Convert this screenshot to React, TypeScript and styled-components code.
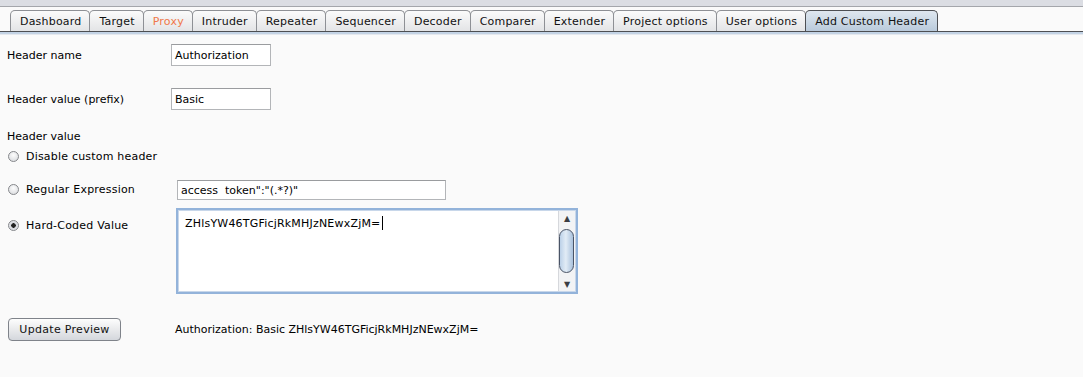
import styled, { createGlobalStyle } from "styled-components";

const GlobalStyle = createGlobalStyle`
  html, body {
    margin: 0;
    padding: 0;
    background: #fafafa;
  }
  body {
    font-family: "DejaVu Sans", "Liberation Sans", sans-serif;
    font-size: 11px;
    color: #000;
  }
`;

const tabs = [
  "Dashboard",
  "Target",
  "Proxy",
  "Intruder",
  "Repeater",
  "Sequencer",
  "Decoder",
  "Comparer",
  "Extender",
  "Project options",
  "User options",
  "Add Custom Header",
];

const HEADER_VALUE = "ZHlsYW46TGFicjRkMHJzNEwxZjM=";

const App: React.FC = () => {
  return (
    <Page>
      <GlobalStyle />
      <TopStrip />
      <TabBar>
        {tabs.map((t) => (
          <Tab
            key={t}
            $active={t === "Add Custom Header"}
            $highlight={t === "Proxy"}
          >
            {t}
          </Tab>
        ))}
      </TabBar>
      <TabUnderline />

      <Content>
        <FieldRow $top={9}>
          <Label>Header name</Label>
          <TextField $width={100} $offset={0}>
            Authorization
          </TextField>
        </FieldRow>
        <FieldRow $top={22}>
          <Label>Header value (prefix)</Label>
          <TextField $width={100} $offset={0}>
            Basic
          </TextField>
        </FieldRow>

        <SectionLabel>Header value</SectionLabel>

        <RadioRow $top={6}>
          <Radio />
          <RadioLabel>Disable custom header</RadioLabel>
        </RadioRow>

        <FieldRow $top={17}>
          <RadioLine>
            <Radio />
            <RadioLabel>Regular Expression</RadioLabel>
          </RadioLine>
          <TextField $width={269} $offset={0} $height={20}>
            access  token":"(.*?)"
          </TextField>
        </FieldRow>

        <AreaRow>
          <RadioLine $pad={11}>
            <Radio $checked />
            <RadioLabel>Hard-Coded Value</RadioLabel>
          </RadioLine>
          <AreaBox>
            <AreaText>
              {HEADER_VALUE}
              <Caret />
            </AreaText>
            <Scrollbar>
              <Arrow>▲</Arrow>
              <Track>
                <Thumb />
              </Track>
              <Arrow>▼</Arrow>
            </Scrollbar>
          </AreaBox>
        </AreaRow>

        <FooterRow>
          <Button>Update Preview</Button>
          <Preview>Authorization: Basic {HEADER_VALUE}</Preview>
        </FooterRow>
      </Content>
    </Page>
  );
};

export default App;

const Page = styled.div`
  width: 1083px;
  height: 377px;
  overflow: hidden;
  background: #fafafa;
`;

const TopStrip = styled.div`
  height: 6px;
  background: #dbdde3;
  border-bottom: 1px solid #a4a6ab;
`;

const TabBar = styled.div`
  display: flex;
  align-items: flex-end;
  padding: 3px 0 0 10px;
  height: 21px;
  border-bottom: 1px solid #4d4f53;
  background: #fafafa;
`;

const Tab = styled.div<{ $active?: boolean; $highlight?: boolean }>`
  box-sizing: border-box;
  height: 21px;
  padding: 0 8px 0 9px;
  margin-right: -1px;
  display: flex;
  align-items: center;
  font-size: 11px;
  letter-spacing: 0.2px;
  color: ${(p) => (p.$highlight ? "#f0784a" : "#111")};
  border: 1px solid ${(p) => (p.$active ? "#4d4f53" : "#8e9095")};
  border-bottom: none;
  border-radius: 5px 5px 0 0;
  background: ${(p) =>
    p.$active
      ? "linear-gradient(#dfe7ef, #b9cadb)"
      : "linear-gradient(#fbfbfb, #e3e4e6)"};
  position: relative;
  z-index: ${(p) => (p.$active ? 1 : 0)};
`;

const TabUnderline = styled.div`
  height: 2px;
  background: #c3d3e5;
  border-bottom: 1px solid #e4e8ee;
`;

const Content = styled.div`
  display: flex;
  flex-direction: column;
  padding-left: 7px;
`;

const FieldRow = styled.div<{ $top: number }>`
  display: flex;
  align-items: center;
  margin-top: ${(p) => p.$top}px;
`;

const Label = styled.div`
  width: 164px;
`;

const TextField = styled.div<{ $width: number; $offset: number; $height?: number }>`
  box-sizing: border-box;
  width: ${(p) => p.$width}px;
  height: ${(p) => p.$height ?? 22}px;
  margin-left: ${(p) => p.$offset}px;
  padding: 0 3px;
  display: flex;
  align-items: center;
  background: #fff;
  border: 1px solid #b3b5b8;
  border-top-color: #9a9c9f;
  white-space: pre;
`;

const SectionLabel = styled.div`
  margin-top: 19px;
  line-height: 15px;
`;

const RadioRow = styled.div<{ $top: number }>`
  display: flex;
  align-items: center;
  margin-top: ${(p) => p.$top}px;
`;

const RadioLine = styled.div<{ $pad?: number }>`
  width: 170px;
  display: flex;
  align-items: center;
  align-self: flex-start;
  padding-top: ${(p) => p.$pad ?? 3}px;
`;

const Radio = styled.span<{ $checked?: boolean }>`
  box-sizing: border-box;
  width: 11px;
  height: 11px;
  margin-left: 1px;
  border-radius: 50%;
  border: 1px solid #85878b;
  background: ${(p) =>
    p.$checked
      ? "radial-gradient(circle, #222 0 2px, #d2d5db 2.5px, #f3f4f6)"
      : "radial-gradient(circle at 50% 35%, #fdfdfd, #d5d7db)"};
  flex-shrink: 0;
`;

const RadioLabel = styled.span`
  margin-left: 7px;
  letter-spacing: 0.2px;
`;

const AreaRow = styled.div`
  display: flex;
  margin-top: 8px;
`;

const AreaBox = styled.div`
  box-sizing: border-box;
  width: 402px;
  height: 86px;
  margin-left: -1px;
  display: flex;
  background: #fff;
  border: 2px solid #93b3da;
  box-shadow: inset 0 0 0 1px #c8d7ea;
`;

const AreaText = styled.div`
  flex: 1;
  padding: 6px 0 0 7px;
  line-height: 15px;
  letter-spacing: 0.2px;
  display: flex;
  align-items: flex-start;
`;

const Caret = styled.span`
  display: inline-block;
  width: 1px;
  height: 14px;
  margin-left: 1px;
  background: #000;
`;

const Scrollbar = styled.div`
  width: 16px;
  margin: 1px 1px 1px 0;
  display: flex;
  flex-direction: column;
  background: #f2f3f5;
  border-left: 1px solid #d6d8dc;
`;

const Arrow = styled.div`
  height: 14px;
  display: flex;
  align-items: center;
  justify-content: center;
  font-size: 8px;
  color: #3b3d42;
`;

const Track = styled.div`
  flex: 1;
  display: flex;
  align-items: center;
`;

const Thumb = styled.div`
  box-sizing: border-box;
  width: 15px;
  height: 44px;
  margin-left: 0;
  border: 1px solid #4a5466;
  border-radius: 8px;
  background: linear-gradient(90deg, #bcd1e8, #e2ecf6 45%, #a9c1dc);
`;

const FooterRow = styled.div`
  display: flex;
  align-items: center;
  margin-top: 24px;
`;

const Button = styled.div`
  box-sizing: border-box;
  width: 113px;
  height: 23px;
  margin-left: 1px;
  display: flex;
  align-items: center;
  justify-content: center;
  border: 1px solid #7f838a;
  border-radius: 4px;
  background: linear-gradient(#fdfdfd, #e9eaec 50%, #d4d7dc);
  color: #111;
  letter-spacing: 0.3px;
`;

const Preview = styled.div`
  margin-left: 54px;
`;
